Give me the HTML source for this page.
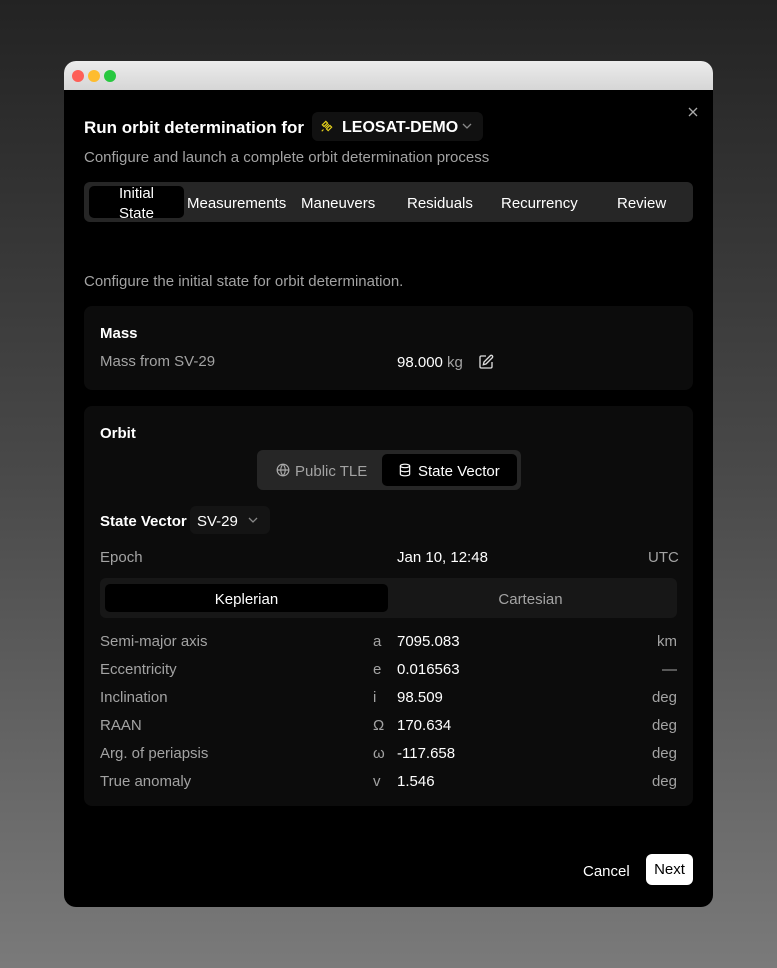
<!DOCTYPE html>
<html><head><style>
*{margin:0;padding:0;box-sizing:border-box}
body{width:777px;height:968px;overflow:hidden;background:linear-gradient(180deg,#232323 0%,#4a4a4a 50%,#7a7a7a 100%);font-family:"Liberation Sans",sans-serif;font-size:15px;color:#fff;position:relative}
.a{position:absolute;white-space:nowrap;line-height:20px;margin-top:1.5px}
.win{position:absolute;left:64px;top:61px;width:649px;height:846px;background:#000;border-radius:12px;overflow:hidden}
.tb{position:absolute;left:0;top:0;width:649px;height:29px;background:linear-gradient(#ececec,#d6d6d6)}
.dot{position:absolute;top:9px;width:12px;height:12px;border-radius:50%}
.g{color:#a3a3a3}
.card{position:absolute;background:#0c0c0c;border-radius:8px}
</style></head><body>
<div class="win">
<div class="tb"><div class="dot" style="left:8px;background:#fe5f57"></div><div class="dot" style="left:24px;background:#febc2e"></div><div class="dot" style="left:40px;background:#28c840"></div></div>
<svg style="position:absolute;left:624px;top:46px" width="10" height="10" viewBox="0 0 10 10" stroke="#aaa" stroke-width="1.3"><path d="M1 1l8 8M9 1l-8 8"/></svg>
<div class="a" style="left:20px;top:54px;font-size:17px;font-weight:bold;line-height:22px">Run orbit determination for</div>
<div style="position:absolute;left:248px;top:51px;width:171px;height:29px;background:#111;border-radius:6px"></div>
<svg style="position:absolute;left:256px;top:58px" width="14" height="14" viewBox="0 0 24 24" fill="none" stroke="#e6d21c" stroke-width="2"><path d="M4 10l6-6 3 3-6 6zM11 17l6-6 3 3-6 6zM9 15l6-6M3 21l3-3"/></svg>
<div class="a" style="left:278px;top:55px;font-size:16px;font-weight:bold">LEOSAT-DEMO</div>
<svg style="position:absolute;left:398px;top:62px" width="10" height="6" viewBox="0 0 10 6" fill="none" stroke="#888" stroke-width="1.3"><path d="M1 1l4 4 4-4"/></svg>
<div class="a g" style="left:20px;top:85px">Configure and launch a complete orbit determination process</div>
<div style="position:absolute;left:20px;top:121px;width:609px;height:40px;background:#262626;border-radius:6px"></div>
<div style="position:absolute;left:25px;top:125px;width:95px;height:32px;background:#000;border-radius:5px"></div>
<div class="a" style="left:25px;top:121px;width:95px;text-align:center;line-height:20px">Initial<br>State</div>
<div class="a" style="left:123px;top:131px">Measurements</div>
<div class="a" style="left:237px;top:131px">Maneuvers</div>
<div class="a" style="left:343px;top:131px">Residuals</div>
<div class="a" style="left:437px;top:131px">Recurrency</div>
<div class="a" style="left:553px;top:131px">Review</div>
<div class="a g" style="left:20px;top:209px">Configure the initial state for orbit determination.</div>
<div class="card" style="left:20px;top:245px;width:609px;height:84px"></div>
<div class="a" style="left:36px;top:261px;font-weight:bold">Mass</div>
<div class="a g" style="left:36px;top:289px">Mass from SV-29</div>
<div class="a" style="left:333px;top:290px">98.000 <span class="g">kg</span></div>
<svg style="position:absolute;left:414px;top:293px" width="16" height="16" viewBox="0 0 24 24" fill="none" stroke="#ddd" stroke-width="2"><path d="M12 3H5a2 2 0 0 0-2 2v14a2 2 0 0 0 2 2h14a2 2 0 0 0 2-2v-7"/><path d="M18.4 2.6a2.1 2.1 0 1 1 3 3L12 15l-4 1 1-4z"/></svg>
<div class="card" style="left:20px;top:345px;width:609px;height:400px"></div>
<div class="a" style="left:36px;top:361px;font-weight:bold">Orbit</div>
<div style="position:absolute;left:193px;top:389px;width:264px;height:40px;background:#262626;border-radius:6px"></div>
<div style="position:absolute;left:318px;top:393px;width:135px;height:32px;background:#000;border-radius:5px"></div>
<svg style="position:absolute;left:212px;top:402px" width="14" height="14" viewBox="0 0 24 24" fill="none" stroke="#aaa" stroke-width="2"><circle cx="12" cy="12" r="10"/><path d="M2 12h20M12 2a15 15 0 0 1 0 20M12 2a15 15 0 0 0 0 20"/></svg>
<div class="a g" style="left:231px;top:399px">Public TLE</div>
<svg style="position:absolute;left:334px;top:402px" width="14" height="14" viewBox="0 0 24 24" fill="none" stroke="#fff" stroke-width="2"><ellipse cx="12" cy="5" rx="8" ry="3"/><path d="M4 5v14c0 1.7 3.6 3 8 3s8-1.3 8-3V5M4 12c0 1.7 3.6 3 8 3s8-1.3 8-3"/></svg>
<div class="a" style="left:354px;top:399px">State Vector</div>
<div class="a" style="left:36px;top:449px;font-weight:bold">State Vector</div>
<div style="position:absolute;left:126px;top:445px;width:80px;height:28px;background:#141414;border-radius:6px"></div>
<div class="a" style="left:133px;top:449px">SV-29</div>
<svg style="position:absolute;left:184px;top:456px" width="10" height="6" viewBox="0 0 10 6" fill="none" stroke="#888" stroke-width="1.3"><path d="M1 1l4 4 4-4"/></svg>
<div class="a g" style="left:36px;top:485px">Epoch</div>
<div class="a" style="left:333px;top:485px">Jan 10, 12:48</div>
<div class="a g" style="left:584px;top:485px">UTC</div>
<div style="position:absolute;left:36px;top:517px;width:577px;height:40px;background:#171717;border-radius:6px"></div>
<div style="position:absolute;left:41px;top:523px;width:283px;height:28px;background:#000;border-radius:5px"></div>
<div class="a" style="left:41px;top:527px;width:283px;text-align:center">Keplerian</div>
<div class="a g" style="left:324px;top:527px;width:285px;text-align:center">Cartesian</div>
<div style="position:absolute;left:36px;top:569px;width:577px">
<div style="position:relative;height:28px"><span class="a g" style="left:0">Semi-major axis</span><span class="a g" style="left:273px">a</span><span class="a" style="left:297px">7095.083</span><span class="a g" style="right:0">km</span></div>
<div style="position:relative;height:28px"><span class="a g" style="left:0">Eccentricity</span><span class="a g" style="left:273px">e</span><span class="a" style="left:297px">0.016563</span><span class="a g" style="right:0">—</span></div>
<div style="position:relative;height:28px"><span class="a g" style="left:0">Inclination</span><span class="a g" style="left:273px">i</span><span class="a" style="left:297px">98.509</span><span class="a g" style="right:0">deg</span></div>
<div style="position:relative;height:28px"><span class="a g" style="left:0">RAAN</span><span class="a g" style="left:273px">Ω</span><span class="a" style="left:297px">170.634</span><span class="a g" style="right:0">deg</span></div>
<div style="position:relative;height:28px"><span class="a g" style="left:0">Arg. of periapsis</span><span class="a g" style="left:273px">ω</span><span class="a" style="left:297px">-117.658</span><span class="a g" style="right:0">deg</span></div>
<div style="position:relative;height:28px"><span class="a g" style="left:0">True anomaly</span><span class="a g" style="left:273px">v</span><span class="a" style="left:297px">1.546</span><span class="a g" style="right:0">deg</span></div>
</div>
<div class="a" style="left:519px;top:799px">Cancel</div>
<div style="position:absolute;left:582px;top:793px;width:47px;height:31px;background:#fff;border-radius:6px;color:#000;text-align:center;line-height:31px">Next</div>
</div>
</body></html>
